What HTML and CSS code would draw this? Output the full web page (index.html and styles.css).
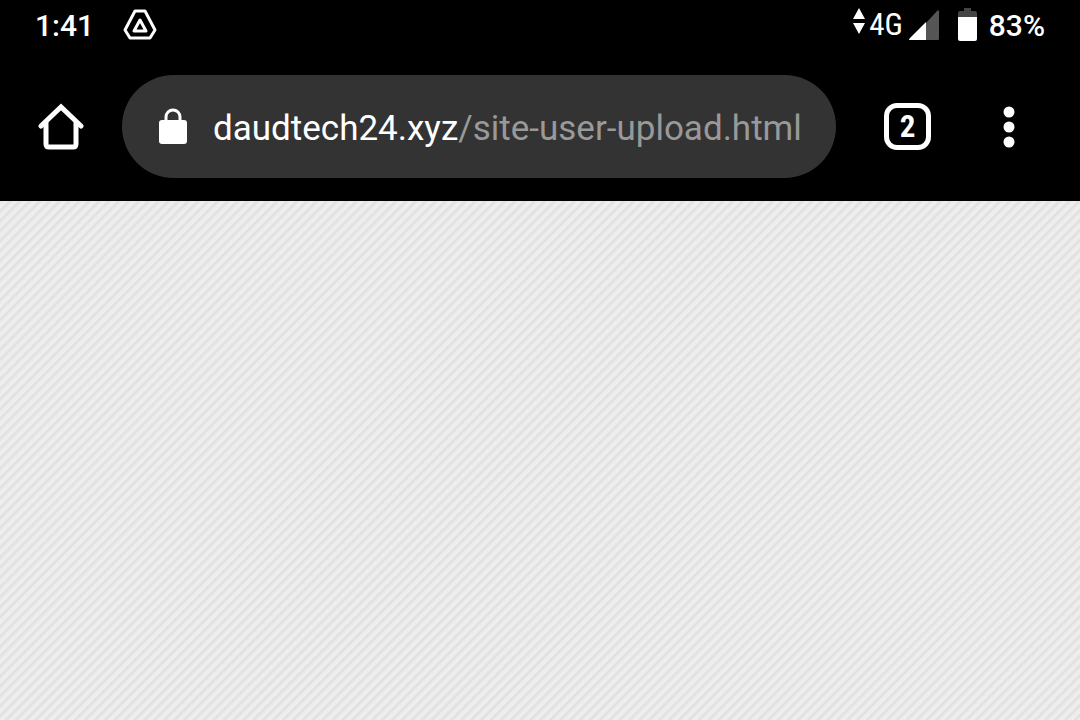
FILE: index.html
```html
<!DOCTYPE html>
<html lang="en">
<head>
    <meta charset="UTF-8">
    <meta name="viewport" content="width=device-width, initial-scale=1.0">
    <title>site-user-upload</title>
    <link rel="stylesheet" href="styles.css">
</head>
<body>

    <header>
        <div class="status-bar">
            <span class="clock">1:41</span>
            <svg class="drive" width="34" height="32" viewBox="0 0 34 32" fill="none" stroke="#fff" stroke-width="3" stroke-linejoin="round">
                <path d="M12 2h10l10 19-5 8H7l-5-8z"/>
                <path d="M17 11l-6 11h12z"/>
            </svg>
            <div class="status-right">
                <svg class="arrows" width="12" height="28" viewBox="0 0 12 28" fill="#fff">
                    <path d="M6 1l6 11H0zM0 16h12L6 27z"/>
                </svg>
                <span class="network">4G</span>
                <svg class="signal" width="30" height="30" viewBox="0 0 30 30">
                    <path d="M17 13L28 1q2-2 2 1v27q0 1-1 1H17z" fill="#555"/>
                    <path d="M17 12v18H1q-2 0 0-2z" fill="#fff"/>
                </svg>
                <svg class="battery" width="19" height="33" viewBox="0 0 19 33">
                    <path d="M6 0h7v3h4q2 0 2 2v4H0V5q0-2 2-2h4z" fill="#444"/>
                    <path d="M0 9h19v22q0 2-2 2H2q-2 0-2-2z" fill="#fff"/>
                </svg>
                <span class="percent">83%</span>
            </div>
        </div>

        <div class="toolbar">
            <button class="home" type="button" aria-label="Home">
                <svg width="46" height="48" viewBox="0 0 46 48" fill="none" stroke="#fff" stroke-width="5" stroke-linecap="round" stroke-linejoin="round">
                    <path d="M3 23L23 4l20 19" stroke-linejoin="miter"/>
                    <path d="M8 20v21q0 3 3 3h24q3 0 3-3V20"/>
                </svg>
            </button>
            <div class="address">
                <svg width="28" height="38" viewBox="0 0 28 38">
                    <path d="M7 14V9a7 7 0 0 1 14 0v5" fill="none" stroke="#fff" stroke-width="3"/>
                    <rect y="12" width="28" height="24" rx="3" fill="#fff"/>
                </svg>
                <div class="url" contenteditable="true" role="textbox" aria-label="Address" spellcheck="false">daudtech24.xyz<span class="path">/site-user-upload.html</span></div>
            </div>
            <button class="tabs" type="button" aria-label="Open tabs">2</button>
            <button class="menu" type="button" aria-label="Menu">
                <svg width="12" height="42" viewBox="0 0 12 42" fill="#fff">
                    <circle cx="6" cy="6" r="5.5"/>
                    <circle cx="6" cy="21" r="5.5"/>
                    <circle cx="6" cy="36" r="5.5"/>
                </svg>
            </button>
        </div>
    </header>

    <main></main>

</body>
</html>
```

FILE: styles.css
```css
* {
    box-sizing: border-box;
}
body {
    display: flex;
    flex-direction: column;
    min-height: 100vh;
    margin: 0;
    font-family: Roboto, sans-serif;
    color: #fff;
}
header {
    padding-bottom: 23px;
    background-color: #000;
}
svg {
    display: block;
    flex: none;
}
.status-bar {
    display: flex;
    align-items: center;
    height: 50px;
    padding: 0 35px;
    font-size: 30px;
    font-weight: 500;
}
.drive {
    margin-left: 29px;
}
.status-right {
    display: flex;
    align-items: center;
    margin-left: auto;
}
.network {
    margin: 0 6px 2px 4px;
    font-family: "Roboto Condensed", Roboto, sans-serif;
    font-stretch: condensed;
    font-size: 31px;
    font-weight: 400;
}
.arrows {
    margin-bottom: 8px;
}
.battery {
    margin: 0 12px 2px 19px;
}
.toolbar {
    display: flex;
    align-items: center;
    padding: 25px 65px 0 38px;
}
button {
    padding: 0;
    border: none;
    background: none;
    color: #fff;
    font-family: inherit;
    cursor: pointer;
}
.address {
    display: flex;
    flex: 1;
    align-items: center;
    min-width: 0;
    height: 103px;
    margin: 0 48px 0 38px;
    padding: 0 30px 0 37px;
    border-radius: 52px;
    background-color: #333;
}
.url {
    flex: 1;
    min-width: 0;
    margin-left: 26px;
    padding-top: 4px;
    overflow: hidden;
    outline: none;
    font-size: 35px;
    line-height: 48px;
    white-space: nowrap;
}
.path {
    color: #999;
}
.tabs {
    width: 47px;
    height: 47px;
    margin-right: 72px;
    border: 5px solid #fff;
    border-radius: 13px;
    font-family: "Roboto Condensed", Roboto, sans-serif;
    font-stretch: condensed;
    font-size: 31px;
    font-weight: 700;
    line-height: 36px;
}
main {
    flex: 1;
    background: repeating-linear-gradient(135deg, #dfdfdf 0, #eee 3px, #eee 5px, #dfdfdf 7px);
}
```
